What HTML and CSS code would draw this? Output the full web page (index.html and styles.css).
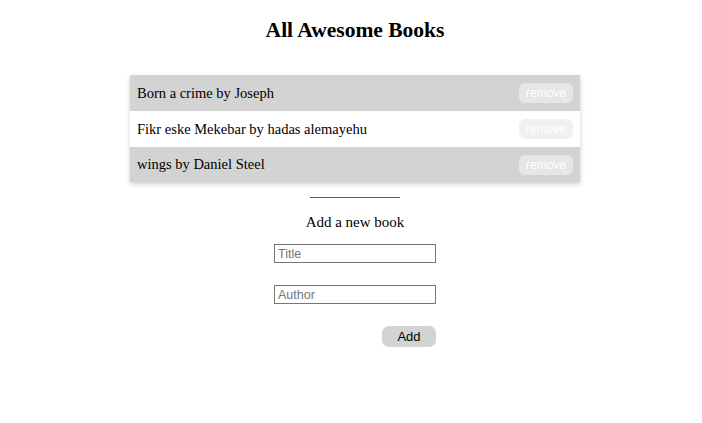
FILE: index.html
```html
<!DOCTYPE html>
<html>
<head>
<meta charset="utf-8">
<link rel="stylesheet" href="styles.css">
</head>
<body>
<main class="page">
  <h1 class="title">All Awesome Books</h1>
  <ul class="books">
    <li class="book"><span class="book-text">Born a crime by Joseph</span><button class="remove">remove</button></li>
    <li class="book"><span class="book-text">Fikr eske Mekebar by hadas alemayehu</span><button class="remove">remove</button></li>
    <li class="book"><span class="book-text">wings by Daniel Steel</span><button class="remove">remove</button></li>
  </ul>
  <div class="divider"></div>
  <form class="add-form">
    <h2 class="form-title">Add a new book</h2>
    <input class="field field-title" type="text" placeholder="Title">
    <input class="field" type="text" placeholder="Author">
    <div class="actions"><button type="button" class="add">Add</button></div>
  </form>
</main>
</body>
</html>
```
FILE: styles.css
```css
* { box-sizing: border-box; }
body {
  margin: 0;
  background: #fff;
  font-family: "Liberation Serif", "Times New Roman", serif;
  color: #000;
}
.page {
  display: flex;
  flex-direction: column;
  align-items: center;
  padding-top: 17px;
  padding-left: 8px;
}
.title {
  margin: 0;
  font-size: 21.5px;
  font-weight: bold;
  line-height: 26px;
}
.books {
  list-style: none;
  margin: 32px 0 0;
  padding: 0;
  width: 450px;
  box-shadow: 0 2px 5px rgba(0,0,0,0.2);
}
.book {
  display: flex;
  align-items: center;
  justify-content: space-between;
  height: 36px;
  padding: 0 7px;
  font-size: 14.5px;
}
.book:nth-child(odd) { background: #d3d3d3; }
.book:last-child { height: 35px; }
.remove {
  width: 54px;
  height: 20px;
  border: none;
  border-radius: 6px;
  background: rgba(235,235,235,0.77);
  color: #fff;
  font-family: "Liberation Sans", Arial, sans-serif;
  font-size: 12px;
  padding: 0;
}
.divider {
  width: 90px;
  height: 1px;
  background: #d42a2a;
  margin-top: 15px;
}
.add-form {
  display: flex;
  flex-direction: column;
  align-items: center;
  width: 162px;
}
.form-title {
  margin: 15px 0 0;
  font-size: 15px;
  font-weight: normal;
  line-height: 18px;
}
.field {
  width: 162px;
  height: 19px;
  margin-top: 22px;
  border: 1px solid #767676;
  padding: 0 3px;
  font-family: "Liberation Sans", Arial, sans-serif;
  font-size: 12.5px;
}
.field-title { margin-top: 13px; }
.field::placeholder { color: #757575; }
.actions {
  width: 100%;
  display: flex;
  justify-content: flex-end;
  margin-top: 22px;
}
.add {
  width: 54px;
  height: 21px;
  border: none;
  border-radius: 7px;
  background: #d3d3d3;
  font-family: "Liberation Sans", Arial, sans-serif;
  font-size: 13px;
  color: #000;
  padding: 0;
}
```
